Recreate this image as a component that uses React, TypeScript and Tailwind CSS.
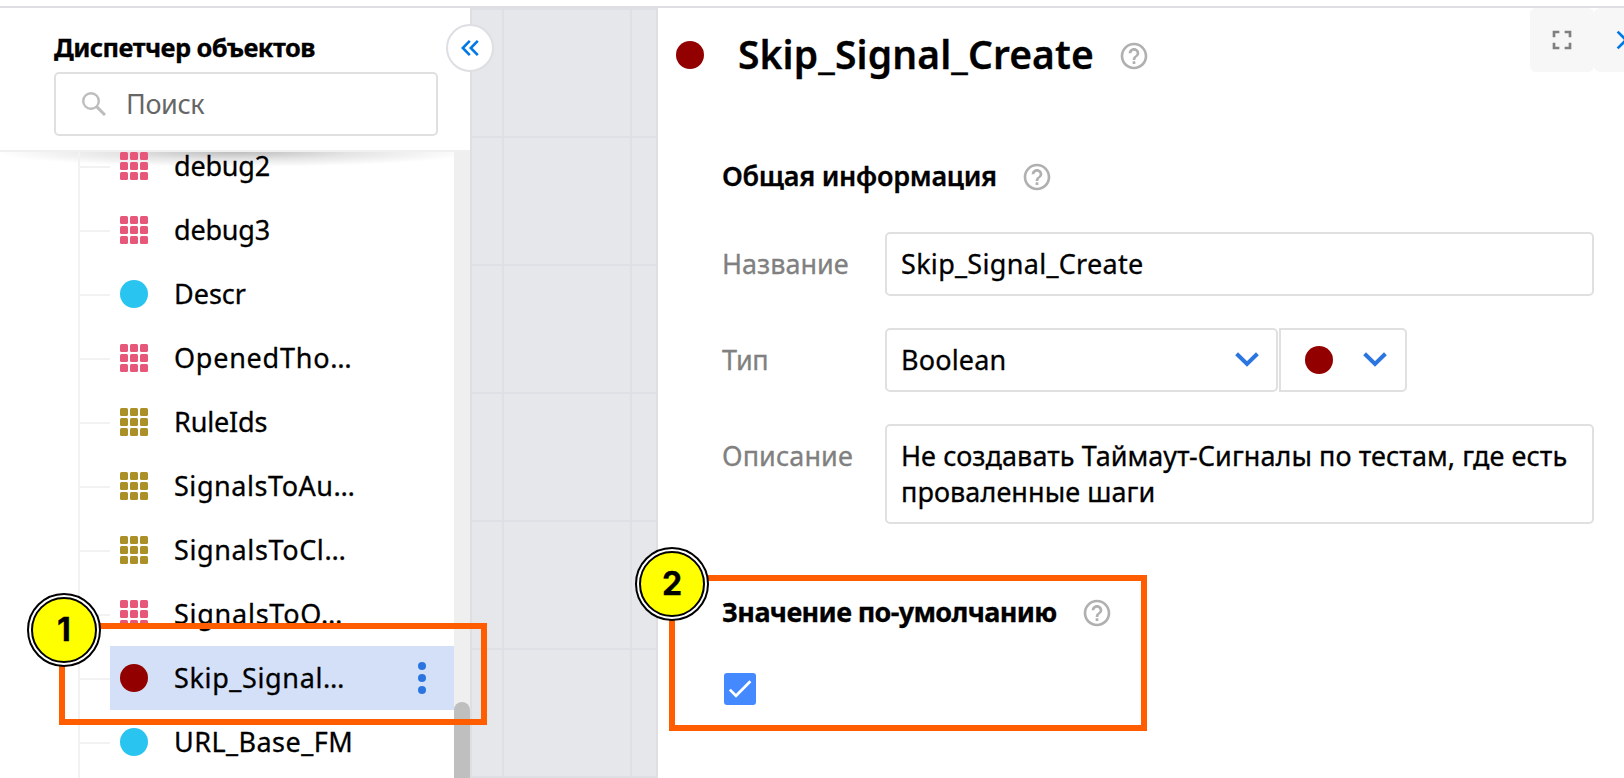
import React from "react";

type Kind = "grid" | "dot";

interface TreeItem {
  label: string;
  kind: Kind;
  color: string;
  spacing: string;
  selected?: boolean;
}

const ITEMS: TreeItem[] = [
  { label: "debug2", kind: "grid", color: "text-[#e65779]", spacing: "tracking-[-0.2px]" },
  { label: "debug3", kind: "grid", color: "text-[#e65779]", spacing: "tracking-[-0.2px]" },
  { label: "Descr", kind: "dot", color: "text-[#2ac4f1]", spacing: "tracking-[0px]" },
  { label: "OpenedTho…", kind: "grid", color: "text-[#e65779]", spacing: "tracking-[0.75px]" },
  { label: "RuleIds", kind: "grid", color: "text-[#ab8f27]", spacing: "tracking-[-0.15px]" },
  { label: "SignalsToAu…", kind: "grid", color: "text-[#ab8f27]", spacing: "tracking-[0.55px]" },
  { label: "SignalsToCl…", kind: "grid", color: "text-[#ab8f27]", spacing: "tracking-[0.62px]" },
  { label: "SignalsToO…", kind: "grid", color: "text-[#e65779]", spacing: "tracking-[0.74px]" },
  { label: "Skip_Signal…", kind: "dot", color: "text-[#930000]", spacing: "tracking-[0.64px]", selected: true },
  { label: "URL_Base_FM", kind: "dot", color: "text-[#2ac4f1]", spacing: "tracking-[0.46px]" },
];

function ItemIcon({ kind, color }: { kind: Kind; color: string }) {
  if (kind === "dot") {
    return <span className={`size-7 shrink-0 rounded-full bg-current ${color}`} />;
  }
  return (
    <svg viewBox="0 0 28 28" className={`size-7 shrink-0 ${color}`} fill="currentColor">
      {[0, 10, 20].map((y) =>
        [0, 10, 20].map((x) => <rect key={`${x}-${y}`} x={x} y={y} width="8" height="8" rx="1.5" />),
      )}
    </svg>
  );
}

function HelpIcon() {
  return (
    <svg viewBox="0 0 24 24" className="size-8 shrink-0 text-[#b0b0b0]" fill="currentColor">
      <path d="M11 18h2v-2h-2v2zm1-16C6.48 2 2 6.48 2 12s4.48 10 10 10 10-4.48 10-10S17.52 2 12 2zm0 18c-4.41 0-8-3.59-8-8s3.59-8 8-8 8 3.59 8 8-3.59 8-8 8zm0-14c-2.21 0-4 1.79-4 4h2c0-1.1.9-2 2-2s2 .9 2 2c0 2-3 1.75-3 5h2c0-2.25 3-2.5 3-5 0-2.21-1.79-4-4-4z" />
    </svg>
  );
}

function Chevron() {
  return (
    <svg viewBox="0 0 24 16" className="h-4 w-6 shrink-0 text-[#2b75e0]" fill="none" stroke="currentColor" strokeWidth="4">
      <path d="M1.6 1.7 12 11.9 22.4 1.7" />
    </svg>
  );
}

function TreeRow({ item }: { item: TreeItem }) {
  return (
    <div className="flex h-16 shrink-0 items-center">
      <span className="mt-0.5 h-0.5 w-[30px] shrink-0 bg-[#f2f2f2]" />
      <div className={`flex h-full grow items-center pl-[10px] ${item.selected ? "bg-[#d3e0f7]" : ""}`}>
        <ItemIcon kind={item.kind} color={item.color} />
        <span className={`ml-[26px] leading-7 whitespace-nowrap ${item.spacing}`}>{item.label}</span>
        {item.selected && (
          <span className="mr-7 ml-auto flex flex-col gap-1">
            <span className="size-2 rounded-full bg-[#2b75e0]" />
            <span className="size-2 rounded-full bg-[#2b75e0]" />
            <span className="size-2 rounded-full bg-[#2b75e0]" />
          </span>
        )}
      </div>
    </div>
  );
}

function Sidebar() {
  return (
    <aside className="relative flex w-[472px] shrink-0 flex-col border-r-2 border-[#dedee3] bg-white">
      <div className="h-36 shrink-0 border-b-2 border-[#f0f0f0] pt-[23px] pl-[54px]">
        <h2 className="h-[41px] text-[25.5px] leading-8 font-bold tracking-[-0.58px] whitespace-nowrap">Диспетчер объектов</h2>
        <div className="flex h-16 w-[384px] items-center rounded-[5px] border-2 border-[#e0e0e0] pl-[26px]">
          <svg viewBox="0 0 24 24" className="size-6 text-[#bdbdbd]" fill="none" stroke="currentColor">
            <circle cx="9" cy="9" r="7.8" strokeWidth="2.4" />
            <path d="M14.6 14.6 23 23" strokeWidth="3" />
          </svg>
          <span className="ml-5 tracking-[-0.4px] text-[#666] [-webkit-text-stroke:0px]">Поиск</span>
        </div>
      </div>
      <div className="flex min-h-0 grow bg-[radial-gradient(ellipse_240px_15px_at_235px_0px,rgba(0,0,0,0.26),rgba(0,0,0,0.1)_50%,transparent)] bg-no-repeat">
        <div className="ml-[78px] flex grow flex-col overflow-hidden border-l-2 border-[#f2f2f2]">
          <div className="-mt-[18px] flex flex-col">
            {ITEMS.map((item) => (
              <TreeRow key={item.label} item={item} />
            ))}
          </div>
        </div>
        <div className="w-4 shrink-0 overflow-hidden bg-[#efefef] pt-[550px]">
          <div className="h-40 rounded-full bg-[#bfbfbf]" />
        </div>
      </div>
      <button className="absolute top-4 -right-6 z-10 flex size-12 items-center justify-center rounded-full border-2 border-[#dedee3] bg-white">
        <svg viewBox="0 0 18 16" className="h-4 w-[18px] text-[#0079e6]" fill="none" stroke="currentColor" strokeWidth="2.6">
          <path d="M8.8.9 1.8 8l7 7.1M16.8.9 9.8 8l7 7.1" />
        </svg>
      </button>
    </aside>
  );
}

function Canvas() {
  return (
    <div className="w-[184px] shrink-0 bg-[#e5e7eb] bg-[linear-gradient(to_bottom,#dfe0e5_2px,transparent_2px),linear-gradient(to_right,#dfe0e5_2px,transparent_2px)] bg-[size:128px_128px] bg-[position:0_0,30px_0]" />
  );
}

function Details() {
  return (
    <main className="flex min-w-0 grow flex-col overflow-hidden border-l-2 border-[#dedee3] bg-white">
      <header className="flex h-[92px] shrink-0 items-center pl-[18px]">
        <span className="mt-0.5 size-7 shrink-0 rounded-full bg-[#930000]" />
        <h1 className="ml-[34px] w-[356px] shrink-0 text-[39px] font-semibold tracking-[0.12px] whitespace-nowrap">Skip_Signal_Create</h1>
        <span className="ml-6 pt-1"><HelpIcon /></span>
        <div className="ml-auto flex w-[94px] shrink-0 self-start">
          <button className="flex size-16 shrink-0 items-center justify-center rounded-md bg-[#f7f7f7] text-[#808080]">
            <svg viewBox="0 0 24 24" className="size-8" fill="currentColor">
              <path d="M7 14H5v5h5v-2H7v-3zm-2-4h2V7h3V5H5v5zm12 7h-3v2h5v-5h-2v3zM14 5v2h3v3h2V5h-5z" />
            </svg>
          </button>
          <button className="flex size-16 shrink-0 items-center justify-center rounded-md bg-[#f7f7f7] text-[#0079e6]">
            <svg viewBox="0 0 24 24" className="size-8" fill="currentColor">
              <path d="M19 6.41 17.59 5 12 10.59 6.41 5 5 6.41 10.59 12 5 17.59 6.41 19 12 13.41 17.59 19 19 17.59 13.41 12z" />
            </svg>
          </button>
        </div>
      </header>

      <section className="mt-[60px] pr-[30px] pl-16">
        <div className="flex h-8 items-center">
          <h3 className="w-[275px] font-semibold tracking-[-0.27px] whitespace-nowrap">Общая информация</h3>
          <span className="ml-6 pt-0.5"><HelpIcon /></span>
        </div>
        <div className="mt-10 grid grid-cols-[163px_1fr] gap-y-8">
          <span className="leading-[64px] text-[#808080]">Название</span>
          <div className="flex h-16 items-center rounded-[5px] border-2 border-[#e0e0e0] pl-[14px] tracking-[0.31px]">Skip_Signal_Create</div>

          <span className="leading-[64px] tracking-[-0.3px] text-[#808080]">Тип</span>
          <div className="flex gap-px">
            <div className="flex h-16 w-[393px] items-center justify-between rounded-[5px] border-2 border-[#e0e0e0] pr-[17px] pl-[14px]">
              <span className="tracking-[0.15px]">Boolean</span>
              <Chevron />
            </div>
            <div className="flex h-16 w-32 items-center justify-between rounded-r-[5px] border-2 border-[#e0e0e0] pr-[18px] pl-6">
              <span className="size-7 rounded-full bg-[#930000]" />
              <Chevron />
            </div>
          </div>

          <span className="leading-[64px] tracking-[0.08px] text-[#808080]">Описание</span>
          <div className="h-[100px] rounded-[5px] border-2 border-[#e0e0e0] pt-3 pl-[14px] leading-9 whitespace-nowrap">
            <p className="tracking-[0.06px]">Не создавать Таймаут-Сигналы по тестам, где есть</p>
            <p className="tracking-[0.08px]">проваленные шаги</p>
          </div>
        </div>
      </section>

      <section className="mt-[72px] pl-16">
        <div className="flex h-8 items-center">
          <h3 className="w-[335px] font-bold tracking-[-0.65px] whitespace-nowrap">Значение по-умолчанию</h3>
          <span className="ml-6 pt-0.5"><HelpIcon /></span>
        </div>
        <div className="mt-[45px] ml-0.5 flex size-8 items-center justify-center rounded-[3px] bg-[#4489ff]">
          <svg viewBox="0 0 24 20" className="h-5 w-6 text-white" fill="none" stroke="currentColor" strokeWidth="2.7">
            <path d="m1.8 10.6 6.2 6.2L22.4 2.2" />
          </svg>
        </div>
      </section>
    </main>
  );
}

function Badge({ n, place }: { n: number; place: string }) {
  return (
    <div className={`absolute z-30 flex size-[74px] rounded-full border-2 border-black bg-white p-0.5 ${place}`}>
      <div className="flex size-full items-center justify-center rounded-full border-2 border-black bg-[#ffff00] font-['Inter',sans-serif] text-[32px] font-bold">
        {n}
      </div>
    </div>
  );
}

export default function App() {
  return (
    <div className="relative flex h-[778px] w-[1624px] flex-col overflow-hidden bg-white font-['Noto_Sans',sans-serif] text-[27px] text-black [-webkit-text-stroke:0.3px]">
      <div className="h-2 shrink-0 border-b-2 border-[#dedee3]" />
      <div className="flex min-h-0 grow">
        <Sidebar />
        <Canvas />
        <Details />
      </div>
      <div className="absolute top-[623px] left-[59px] z-20 h-[102px] w-[428px] border-[6px] border-[#ff5d00]" />
      <div className="absolute top-[575px] left-[669px] z-20 h-[156px] w-[478px] border-[6px] border-[#ff5d00]" />
      <Badge n={1} place="top-[593px] left-[27px]" />
      <Badge n={2} place="top-[547px] left-[635px]" />
    </div>
  );
}
